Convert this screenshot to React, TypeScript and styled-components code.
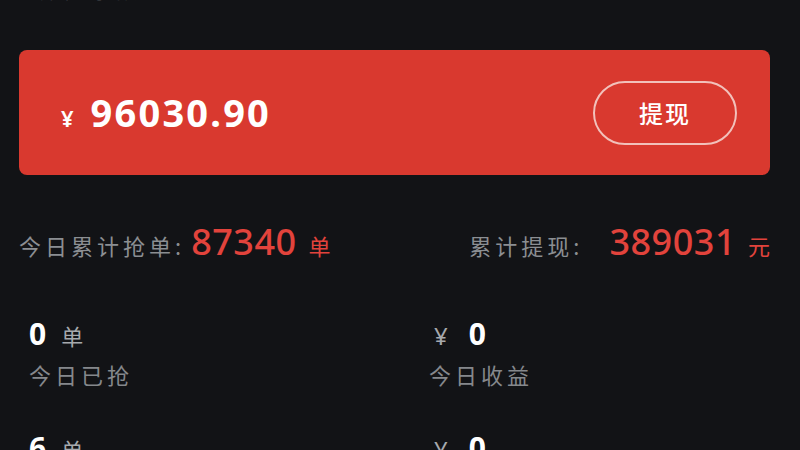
import React from "react";
import styled, { createGlobalStyle } from "styled-components";

const GlobalStyle = createGlobalStyle`
  html, body {
    margin: 0;
    padding: 0;
    background: #121316;
    overflow: hidden;
  }
  body {
    font-family: "Noto Sans", "Noto Sans CJK SC", sans-serif;
    color: #ffffff;
  }
`;

const Page = styled.div`
  width: 800px;
  display: flex;
  flex-direction: column;
  background: #121316;
  & > * {
    flex-shrink: 0;
  }
`;

const TopTitle = styled.div`
  margin: -26px 0 0 40px;
  height: 30px;
  line-height: 30px;
  font-size: 22px;
  letter-spacing: 3px;
  color: #4a4e53;
`;

const BalanceCard = styled.div`
  margin: 46px 0 0 19px;
  width: 751px;
  height: 125px;
  box-sizing: border-box;
  padding: 0 33px 0 42px;
  display: flex;
  align-items: center;
  justify-content: space-between;
  background: #d9392f;
  border-radius: 8px;
`;

const Amount = styled.div`
  display: flex;
  align-items: baseline;
  gap: 17px;
  color: #ffffff;
`;

const Yen = styled.span<{ $size?: number; $color?: string; $weight?: number }>`
  font-size: ${(p) => p.$size ?? 20}px;
  font-weight: ${(p) => p.$weight ?? 600};
  color: ${(p) => p.$color ?? "#ffffff"};
`;

const BigNumber = styled.span`
  font-size: 38px;
  font-weight: 700;
  letter-spacing: 2.2px;
  line-height: 1;
`;

const WithdrawButton = styled.button`
  width: 144px;
  height: 64px;
  box-sizing: border-box;
  border: 2px solid #f2c1bb;
  border-radius: 32px;
  background: transparent;
  color: #ffffff;
  font-family: "Noto Sans CJK SC", sans-serif;
  font-size: 24px;
  font-weight: 500;
  letter-spacing: 2px;
  padding: 0;
  cursor: pointer;
`;

const SummaryRow = styled.div`
  margin: 42px 0 0 19px;
  width: 751px;
  height: 50px;
  display: flex;
  align-items: baseline;
  justify-content: space-between;
`;

const SummaryItem = styled.div`
  display: flex;
  align-items: baseline;
`;

const SummaryLabel = styled.span<{ $gap: number }>`
  font-family: "Noto Sans CJK SC", sans-serif;
  font-size: 22px;
  letter-spacing: 4px;
  color: #8b8e92;
  margin-right: ${(p) => p.$gap}px;
`;

const RedNumber = styled.span`
  font-size: 36px;
  font-weight: 500;
  color: #e2433c;
  letter-spacing: 0.5px;
`;

const RedUnit = styled.span`
  font-family: "Noto Sans CJK SC", sans-serif;
  font-size: 22px;
  color: #e2433c;
  margin-left: 12px;
`;

const StatsGrid = styled.div`
  margin-top: 49px;
  display: grid;
  grid-template-columns: 400px 400px;
`;

const StatCell = styled.div`
  padding: 0 0 41px 29px;
  display: flex;
  flex-direction: column;
  gap: 7px;
`;

const StatValue = styled.div<{ $gap: number }>`
  height: 36px;
  display: flex;
  align-items: baseline;
  gap: ${(p) => p.$gap}px;
`;

const StatNumber = styled.span`
  font-size: 30px;
  font-weight: 700;
  line-height: 36px;
  color: #ffffff;
`;

const StatUnit = styled.span`
  font-family: "Noto Sans CJK SC", sans-serif;
  font-size: 22px;
  color: #a6a9ad;
`;

const StatLabel = styled.div`
  height: 30px;
  line-height: 30px;
  font-family: "Noto Sans CJK SC", sans-serif;
  font-size: 22px;
  letter-spacing: 4px;
  color: #85888c;
`;

const YenSlot = styled.span`
  padding-left: 5px;
`;

type Stat = { value: string; unit: string; prefix?: boolean; label: string };

const stats: Stat[] = [
  { value: "0", unit: "单", label: "今日已抢" },
  { value: "0", unit: "¥", prefix: true, label: "今日收益" },
  { value: "6", unit: "单", label: "累计已抢" },
  { value: "0", unit: "¥", prefix: true, label: "累计收益" },
];

export default function App() {
  return (
    <Page>
      <GlobalStyle />
      <TopTitle>账户余额</TopTitle>
      <BalanceCard>
        <Amount>
          <Yen $size={22}>¥</Yen>
          <BigNumber>96030.90</BigNumber>
        </Amount>
        <WithdrawButton>提现</WithdrawButton>
      </BalanceCard>
      <SummaryRow>
        <SummaryItem>
          <SummaryLabel $gap={6}>今日累计抢单:</SummaryLabel>
          <RedNumber>87340</RedNumber>
          <RedUnit>单</RedUnit>
        </SummaryItem>
        <SummaryItem>
          <SummaryLabel $gap={26}>累计提现:</SummaryLabel>
          <RedNumber>389031</RedNumber>
          <RedUnit>元</RedUnit>
        </SummaryItem>
      </SummaryRow>
      <StatsGrid>
        {stats.map((s, i) => (
          <StatCell key={i}>
            <StatValue $gap={s.prefix ? 21 : 15}>
              {s.prefix ? (
                <>
                  <YenSlot>
                    <Yen $size={24} $weight={400} $color="#a6a9ad">
                      ¥
                    </Yen>
                  </YenSlot>
                  <StatNumber>{s.value}</StatNumber>
                </>
              ) : (
                <>
                  <StatNumber>{s.value}</StatNumber>
                  <StatUnit>{s.unit}</StatUnit>
                </>
              )}
            </StatValue>
            <StatLabel>{s.label}</StatLabel>
          </StatCell>
        ))}
      </StatsGrid>
    </Page>
  );
}
